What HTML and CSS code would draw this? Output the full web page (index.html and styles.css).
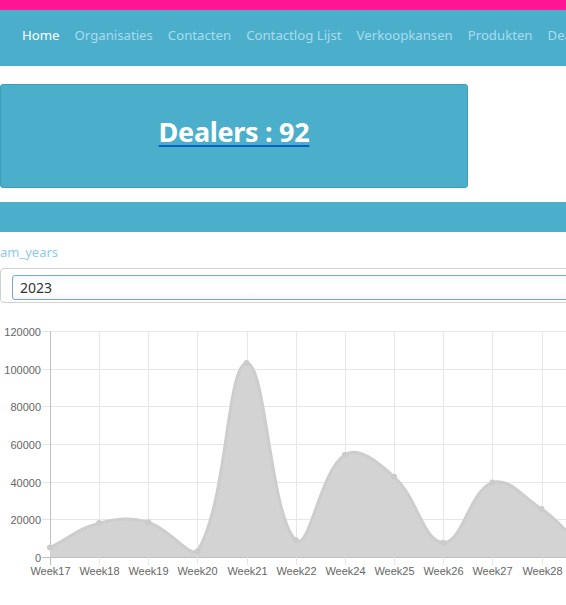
FILE: index.html
```html
<!DOCTYPE html>
<html>
<head>
<meta charset="utf-8">
<link rel="stylesheet" href="styles.css">
</head>
<body>
<div class="topbar"></div>
<nav class="nav">
  <a class="nav-item active">Home</a>
  <a class="nav-item">Organisaties</a>
  <a class="nav-item">Contacten</a>
  <a class="nav-item">Contactlog Lijst</a>
  <a class="nav-item">Verkoopkansen</a>
  <a class="nav-item">Produkten</a>
  <a class="nav-item">Dealers</a>
</nav>
<div class="dealers-box"><a class="dealers-link">Dealers : 92</a></div>
<div class="bluebar"></div>
<div class="field-label">am_years</div>
<div class="select-wrap"><div class="select">2023</div></div>
<div class="chart-wrap"><svg id="chart" class="chart" width="566" height="280" viewBox="0 0 566 280"></svg></div>
<script src="chart.js"></script>
</body>
</html>
```
FILE: styles.css
```css
html, body { margin: 0; padding: 0; }
body {
  width: 566px;
  overflow: hidden;
  background: #fff;
  font-family: "Noto Sans", "Open Sans", sans-serif;
}
.topbar { height: 10px; background: #ff1493; }
.nav {
  height: 56px;
  box-sizing: border-box;
  padding: 0 0 6px 22px;
  background: #4bafcb;
  display: flex;
  align-items: center;
  gap: 15px;
  white-space: nowrap;
  overflow: hidden;
}
.nav-item { color: #a9dcee; font-size: 13.2px; }
.nav-item.active { color: #fff; }
.dealers-box {
  margin-top: 18px;
  width: 468px;
  height: 104px;
  background: #4bafcb;
  border: 1px solid #3f9db7;
  border-radius: 3px;
  display: flex;
  justify-content: center;
  padding-top: 29px;
  box-sizing: border-box;
}
.dealers-link {
  color: #fff;
  font-size: 27px;
  font-weight: 700;
  line-height: 36px;
  text-decoration: underline;
  text-decoration-color: #0b5fc2;
  text-decoration-thickness: 2px;
  text-underline-offset: 3px;
  letter-spacing: -0.3px;
}
.bluebar { margin-top: 14px; height: 30px; background: #4bafcb; }
.field-label {
  margin-top: 11px;
  color: #8fcbea;
  font-size: 13px;
  line-height: 18px;
}
.select-wrap {
  margin-top: 7px;
  width: 600px;
  height: 35px;
  box-sizing: border-box;
  border: 1px solid #d0d0d0;
  border-radius: 4px;
  padding: 6px 0 0 11px;
}
.select {
  height: 25px;
  box-sizing: border-box;
  border: 1px solid #7ba3da;
  border-radius: 3px;
  background: linear-gradient(#f7fafd, #fff 40%, #fff 70%, #f3f6fb);
  color: #333;
  font-size: 14px;
  line-height: 23px;
  padding-left: 7px;
}
.chart-wrap { margin-top: 17px; height: 280px; }
.chart { display: block; }
```
FILE: chart.js
```js
(function () {
  var NS = "http://www.w3.org/2000/svg";
  var svg = document.getElementById("chart");
  var top = 11, bottom = 237, left = 50, step = 49.15, max = 120000;
  var labels = ["Week17","Week18","Week19","Week20","Week21","Week22","Week24","Week25","Week26","Week27","Week28","Week29","Week30"];
  var data = [5000,18000,18400,3000,103000,9000,54300,42600,7600,39500,25500,6000,12000];
  var FONT = "Liberation Sans, Arial, sans-serif";
  function el(name, attrs, text) {
    var e = document.createElementNS(NS, name);
    for (var k in attrs) e.setAttribute(k, attrs[k]);
    if (text) e.textContent = text;
    svg.appendChild(e);
    return e;
  }
  function yv(v) { return bottom - (v / max) * (bottom - top); }
  for (var i = 0; i <= 6; i++) {
    var y = Math.round(yv(i * 20000)) + 0.5;
    el("line", { x1: 42, x2: 566, y1: y, y2: y, stroke: i === 0 ? "#bfbfbf" : "#e6e6e6", "stroke-width": 1 });
    el("text", { x: 41, y: y + 4, "text-anchor": "end", "font-family": FONT, "font-size": 11, fill: "#666" }, String(i * 20000));
  }
  var pts = [];
  for (var j = 0; j < labels.length; j++) {
    var x = Math.round(left + j * step) + 0.5;
    el("line", { x1: x, x2: x, y1: top, y2: bottom + 8, stroke: j === 0 ? "#bfbfbf" : "#e6e6e6", "stroke-width": 1 });
    if (x < 566) el("text", { x: x, y: 255, "text-anchor": "middle", "font-family": FONT, "font-size": 11, fill: "#666" }, labels[j]);
    pts.push({ x: left + j * step, y: yv(data[j]) });
  }
  var t = 0.4, cps = [];
  for (var k = 0; k < pts.length; k++) {
    var p = pts[k], pr = pts[k - 1] || p, nx = pts[k + 1] || p;
    var d01 = Math.hypot(p.x - pr.x, p.y - pr.y), d12 = Math.hypot(nx.x - p.x, nx.y - p.y);
    var s01 = d01 / (d01 + d12 || 1), s12 = d12 / (d01 + d12 || 1);
    var fa = t * s01, fb = t * s12;
    var prev = { x: p.x - fa * (nx.x - pr.x), y: p.y - fa * (nx.y - pr.y) };
    var next = { x: p.x + fb * (nx.x - pr.x), y: p.y + fb * (nx.y - pr.y) };
    prev.y = Math.min(Math.max(prev.y, top), bottom);
    next.y = Math.min(Math.max(next.y, top), bottom);
    cps.push({ prev: prev, next: next });
  }
  var d = "M" + pts[0].x + " " + pts[0].y;
  for (var m = 1; m < pts.length; m++) {
    var a = cps[m - 1].next, b = cps[m].prev;
    d += " C" + a.x.toFixed(2) + " " + a.y.toFixed(2) + " " + b.x.toFixed(2) + " " + b.y.toFixed(2) + " " + pts[m].x.toFixed(2) + " " + pts[m].y.toFixed(2);
  }
  var last = pts[pts.length - 1];
  el("path", { d: d + " L" + last.x + " " + bottom + " L" + pts[0].x + " " + bottom + " Z", fill: "#d3d3d3", stroke: "none" });
  el("path", { d: d, fill: "none", stroke: "#cdcdcd", "stroke-width": 3 });
  for (var n = 0; n < pts.length; n++) {
    el("circle", { cx: pts[n].x, cy: pts[n].y, r: 3, fill: "#cbcbcb" });
  }
})();
```
